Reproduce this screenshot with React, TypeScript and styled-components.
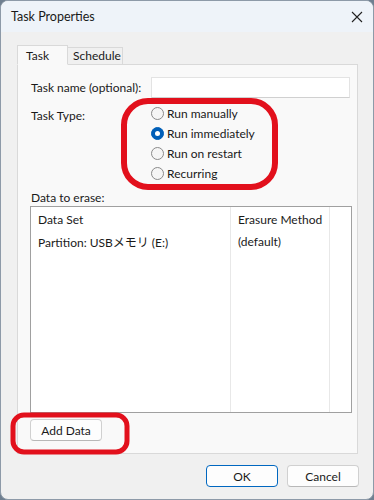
import styled, { createGlobalStyle } from "styled-components";

const GlobalStyle = createGlobalStyle`
  html, body {
    margin: 0;
    padding: 0;
    background: #6f7f90;
  }
  body {
    font-family: Lato, "Noto Sans CJK JP", sans-serif;
    font-size: 12px;
    color: #1a1a1a;
  }
`;

const Window = styled.div`
  position: relative;
  width: 374px;
  height: 500px;
  box-sizing: border-box;
  border: 1px solid #8d9aa8;
  border-radius: 8px;
  background: #f0f0f0;
  overflow: hidden;
  display: flex;
  flex-direction: column;
`;

const TitleBar = styled.div`
  height: 31px;
  flex-shrink: 0;
  background: #eef3f9;
  display: flex;
  align-items: center;
  justify-content: space-between;
  padding: 0 10px 0 10px;
`;

const Title = styled.span`
  font-size: 12.5px;
`;

const Close = styled.svg`
  width: 12px;
  height: 12px;
`;

const Body = styled.div`
  flex: 1;
  display: flex;
  flex-direction: column;
  padding: 12px 15px 0 16px;
`;

const TabRow = styled.div`
  display: flex;
  align-items: flex-end;
  height: 20px;
  position: relative;
  z-index: 1;
`;

const Tab = styled.div<{ $active?: boolean }>`
  box-sizing: border-box;
  height: ${(p) => (p.$active ? "20px" : "17px")};
  padding: ${(p) => (p.$active ? "2px 8px 0 8px" : "0 5px")};
  width: ${(p) => (p.$active ? "51px" : "56px")};
  border: 1px solid #d9d9d9;
  border-bottom: ${(p) => (p.$active ? "1px solid #f9f9f9" : "none")};
  background: ${(p) => (p.$active ? "#f9f9f9" : "#f0f0f0")};
  margin-bottom: ${(p) => (p.$active ? "-1px" : "0")};
  margin-left: ${(p) => (p.$active ? "0" : "-1px")};
  line-height: 16px;
`;

const Panel = styled.div`
  height: 390px;
  box-sizing: border-box;
  border: 1px solid #d9d9d9;
  background: #f9f9f9;
  padding: 12px 7px 12px 12px;
  display: flex;
  flex-direction: column;
`;

const FormGrid = styled.div`
  display: grid;
  grid-template-columns: 121px 1fr;
  row-gap: 7px;
`;

const Label = styled.div`
  line-height: 21px;
  padding-left: 1px;
`;

const TextInput = styled.div`
  height: 21px;
  box-sizing: border-box;
  border: 1px solid #e3e3e3;
  border-bottom-color: #d0d0d0;
  background: #fff;
`;

const RadioList = styled.div`
  display: flex;
  flex-direction: column;
  margin-top: -2px;
`;

const RadioRow = styled.div`
  display: flex;
  align-items: center;
  height: 20px;
  gap: 3px;
`;

const RadioCircle = styled.span<{ $checked?: boolean }>`
  box-sizing: border-box;
  width: 13px;
  height: 13px;
  border-radius: 50%;
  background: ${(p) => (p.$checked ? "#005fb8" : "#f5f5f5")};
  border: 1px solid ${(p) => (p.$checked ? "#005fb8" : "#8a8a8a")};
  display: flex;
  align-items: center;
  justify-content: center;
  &::after {
    content: "";
    display: ${(p) => (p.$checked ? "block" : "none")};
    width: 5px;
    height: 5px;
    border-radius: 50%;
    background: #fff;
  }
`;

const SectionLabel = styled.div`
  margin-top: 7px;
  line-height: 16px;
  padding-left: 1px;
`;

const ListView = styled.div`
  width: 322px;
  height: 207px;
  box-sizing: border-box;
  border: 1px solid #a0a0a0;
  background: #fff;
  display: grid;
  grid-template-columns: 200px 99px 1fr;
  grid-template-rows: 24px 20px 1fr;
`;

const Cell = styled.div<{ $divider?: boolean }>`
  padding-left: 7px;
  display: flex;
  align-items: center;
  border-right: ${(p) => (p.$divider ? "1px solid #e8e8e8" : "none")};
  white-space: nowrap;
`;

const Button = styled.div<{ $default?: boolean }>`
  width: 72px;
  height: 22px;
  box-sizing: border-box;
  border: 1px solid ${(p) => (p.$default ? "#0067c0" : "#d0d0d0")};
  border-bottom-color: ${(p) => (p.$default ? "#0067c0" : "#b8b8b8")};
  border-radius: 4px;
  background: #fdfdfd;
  display: flex;
  align-items: center;
  justify-content: center;
`;

const PanelFooter = styled.div`
  margin-top: auto;
`;

const Footer = styled.div`
  display: flex;
  justify-content: flex-end;
  gap: 9px;
  padding-top: 11px;
  margin-right: -1px;
`;

const Annotations = styled.svg`
  position: absolute;
  left: 0;
  top: 0;
  width: 374px;
  height: 500px;
  pointer-events: none;
`;

const options = [
  { label: "Run manually", checked: false },
  { label: "Run immediately", checked: true },
  { label: "Run on restart", checked: false },
  { label: "Recurring", checked: false },
];

export default function App() {
  return (
    <>
      <GlobalStyle />
      <Window>
        <TitleBar>
          <Title>Task Properties</Title>
          <Close viewBox="0 0 12 12">
            <path d="M1 1 L11 11 M11 1 L1 11" stroke="#222" strokeWidth="1.1" />
          </Close>
        </TitleBar>
        <Body>
          <TabRow>
            <Tab $active>Task</Tab>
            <Tab>Schedule</Tab>
          </TabRow>
          <Panel>
            <FormGrid>
              <Label>Task name (optional):</Label>
              <TextInput />
              <Label>Task Type:</Label>
              <RadioList>
                {options.map((o) => (
                  <RadioRow key={o.label}>
                    <RadioCircle $checked={o.checked} />
                    {o.label}
                  </RadioRow>
                ))}
              </RadioList>
            </FormGrid>
            <SectionLabel>Data to erase:</SectionLabel>
            <ListView>
              <Cell $divider>Data Set</Cell>
              <Cell $divider>Erasure Method</Cell>
              <Cell />
              <Cell $divider>Partition: USBメモリ (E:)</Cell>
              <Cell $divider>(default)</Cell>
              <Cell />
              <Cell $divider />
              <Cell $divider />
              <Cell />
            </ListView>
            <PanelFooter>
              <Button>Add Data</Button>
            </PanelFooter>
          </Panel>
          <Footer>
            <Button $default>OK</Button>
            <Button>Cancel</Button>
          </Footer>
        </Body>
        <Annotations viewBox="0 0 374 500">
          <rect x="123" y="100" width="151" height="86" rx="24" fill="none" stroke="#e2101c" strokeWidth="6" />
          <rect x="12" y="414" width="114" height="37" rx="11" fill="none" stroke="#e2101c" strokeWidth="5" />
        </Annotations>
      </Window>
    </>
  );
}
